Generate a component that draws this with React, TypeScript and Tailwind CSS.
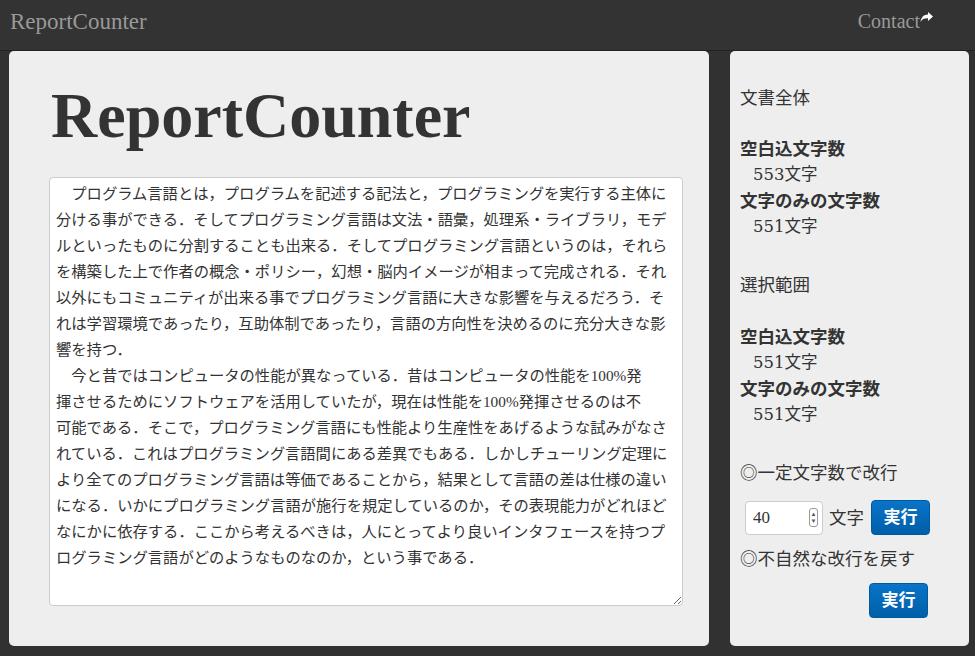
import React from 'react';

const serifJp = { fontFamily: '"Liberation Serif", "Noto Sans CJK JP", serif' };
const wideSerifJp = { fontFamily: '"DejaVu Serif", "Noto Sans CJK JP", serif' };

const reportText = [
  '　プログラム言語とは，プログラムを記述する記法と，プログラミングを実行する主体に',
  '分ける事ができる．そしてプログラミング言語は文法・語彙，処理系・ライブラリ，モデ',
  'ルといったものに分割することも出来る．そしてプログラミング言語というのは，それら',
  'を構築した上で作者の概念・ポリシー，幻想・脳内イメージが相まって完成される．それ',
  '以外にもコミュニティが出来る事でプログラミング言語に大きな影響を与えるだろう．そ',
  'れは学習環境であったり，互助体制であったり，言語の方向性を決めるのに充分大きな影',
  '響を持つ．',
  '　今と昔ではコンピュータの性能が異なっている．昔はコンピュータの性能を100%発',
  '揮させるためにソフトウェアを活用していたが，現在は性能を100%発揮させるのは不',
  '可能である．そこで，プログラミング言語にも性能より生産性をあげるような試みがなさ',
  'れている．これはプログラミング言語間にある差異でもある．しかしチューリング定理に',
  'より全てのプログラミング言語は等価であることから，結果として言語の差は仕様の違い',
  'になる．いかにプログラミング言語が施行を規定しているのか，その表現能力がどれほど',
  'なにかに依存する．ここから考えるべきは，人にとってより良いインタフェースを持つプ',
  'ログラミング言語がどのようなものなのか，という事である．',
].join('\n');

function ShareIcon() {
  return (
    <svg width="13" height="12" viewBox="0 0 13 12" className="inline-block -mt-[10px]">
      <path d="M13 4.5 L8 0 V2.6 C3.5 2.8 1 5.5 0.5 10 C2 7.2 4.4 6.2 8 6.3 V9 Z" fill="#fff" />
    </svg>
  );
}

function Stat({ label, value }: { label: string; value: string }) {
  return (
    <>
      <div className="font-bold leading-[26px]">{label}</div>
      <div className="pl-[13px] leading-[26px] text-[16.5px]" style={wideSerifJp}>
        {value}
      </div>
    </>
  );
}

function RunButton() {
  return (
    <button className="h-[35px] w-[59px] rounded-[4px] bg-gradient-to-b from-[#0a74c8] to-[#005fa8] border border-[#005a9e] text-white font-bold text-[17px] leading-none">
      実行
    </button>
  );
}

export default function App() {
  return (
    <div className="w-full h-[656px] overflow-hidden bg-[#313131] text-[#333]" style={serifJp}>
      <nav className="h-[51px] bg-[#333] border-b border-[#222] flex items-start justify-between">
        <span className="ml-[10px] mt-[5px] text-[23px] text-[#999]">ReportCounter</span>
        <span className="mr-[42px] mt-[6px] text-[20px] text-[#999]">
          Contact
          <ShareIcon />
        </span>
      </nav>

      <div className="flex gap-[21px] pl-[9px]">
        <section className="w-[700px] h-[595px] bg-[#eee] rounded-[5px] pt-[30px] pl-[40px]">
          <h1 className="text-[64px] leading-[69px] font-bold pl-[2px]" style={{ fontFamily: '"Liberation Serif", serif' }}>
            ReportCounter
          </h1>
          <textarea
            className="mt-[27px] block w-[634px] h-[429px] bg-white border border-[#ccc] rounded-[4px] px-[6px] pt-[3px] text-[15.3px] leading-[26px] text-[#333] whitespace-pre resize-y outline-none"
            style={serifJp}
            defaultValue={reportText}
          />
        </section>

        <aside className="w-[239px] h-[595px] bg-[#eee] rounded-[5px] pt-[34px] pl-[10px] text-[17.5px]">
          <div className="leading-[26px]">文書全体</div>
          <div className="mt-[25px]">
            <Stat label="空白込文字数" value="553文字" />
            <Stat label="文字のみの文字数" value="551文字" />
          </div>
          <div className="mt-[32px] leading-[26px]">選択範囲</div>
          <div className="mt-[26px]">
            <Stat label="空白込文字数" value="551文字" />
            <Stat label="文字のみの文字数" value="551文字" />
          </div>
          <div className="mt-[32px] leading-[26px]">◎一定文字数で改行</div>
          <div className="mt-[14px] flex items-center">
            <div className="ml-[5px] w-[78px] h-[34px] bg-white border border-[#ccc] rounded-[4px] flex items-center justify-between pl-[7px] pr-[4px]">
              <span className="text-[17px]">40</span>
              <span className="w-[9px] h-[19px] border border-[#999] rounded-[3px] flex flex-col items-center justify-center text-[6px] leading-[7px] text-[#555]">
                <span>▲</span>
                <span>▼</span>
              </span>
            </div>
            <span className="ml-[6px] mr-[7px] leading-[26px]">文字</span>
            <RunButton />
          </div>
          <div className="mt-[11px] leading-[26px]">◎不自然な改行を戻す</div>
          <div className="mt-[11px] ml-[129px]">
            <RunButton />
          </div>
        </aside>
      </div>
    </div>
  );
}
